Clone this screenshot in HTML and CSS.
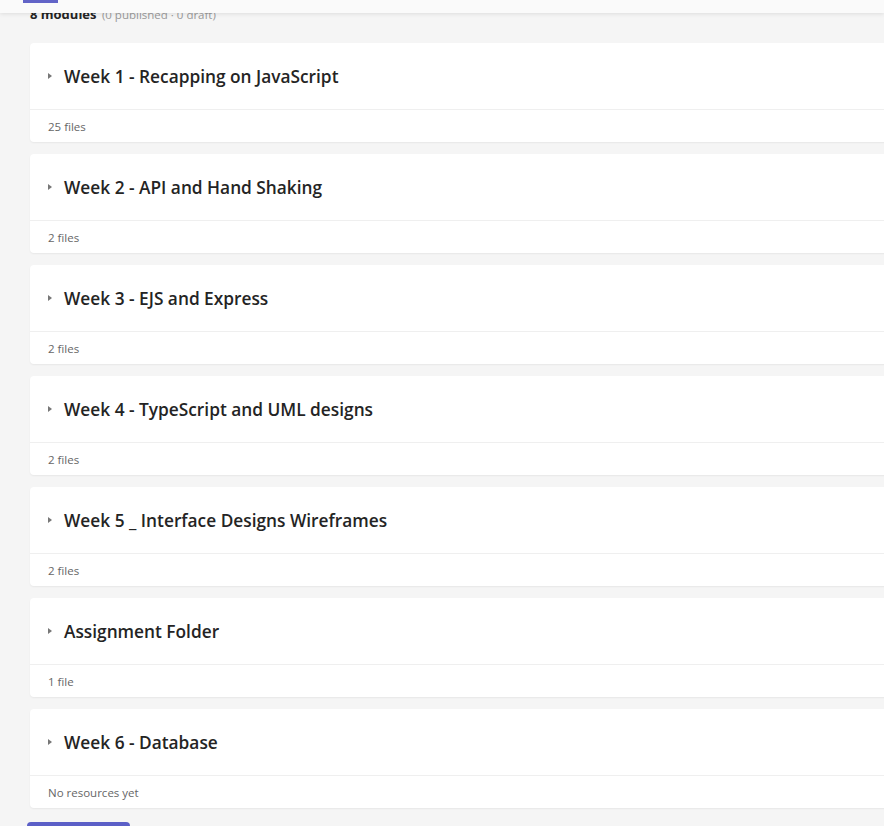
FILE: index.html
```html
<!DOCTYPE html>
<html>
<head>
<meta charset="utf-8">
<link rel="stylesheet" href="styles.css">
</head>
<body>
<header class="topbar"><span class="tab"></span></header>
<main class="page">
  <div class="summary"><b>8 modules</b> <span class="muted">(0 published · 0 draft)</span></div>
  <section class="module">
    <div class="module-head"><span class="caret"></span><h2>Week 1 - Recapping on JavaScript</h2></div>
    <div class="module-foot">25 files</div>
  </section>
  <section class="module">
    <div class="module-head"><span class="caret"></span><h2>Week 2 - API and Hand Shaking</h2></div>
    <div class="module-foot">2 files</div>
  </section>
  <section class="module">
    <div class="module-head"><span class="caret"></span><h2>Week 3 - EJS and Express</h2></div>
    <div class="module-foot">2 files</div>
  </section>
  <section class="module">
    <div class="module-head"><span class="caret"></span><h2>Week 4 - TypeScript and UML designs</h2></div>
    <div class="module-foot">2 files</div>
  </section>
  <section class="module">
    <div class="module-head"><span class="caret"></span><h2>Week 5 _ Interface Designs Wireframes</h2></div>
    <div class="module-foot">2 files</div>
  </section>
  <section class="module">
    <div class="module-head"><span class="caret"></span><h2>Assignment Folder</h2></div>
    <div class="module-foot">1 file</div>
  </section>
  <section class="module">
    <div class="module-head"><span class="caret"></span><h2>Week 6 - Database</h2></div>
    <div class="module-foot">No resources yet</div>
  </section>
  <div class="actions"><button class="add-btn" aria-label="Add module"></button></div>
</main>
</body>
</html>
```
FILE: styles.css
```css
html, body {
  margin: 0;
  padding: 0;
  background: #f5f5f5;
  overflow: hidden;
  font-family: "Open Sans", "Noto Sans", sans-serif;
  color: #242424;
}
.topbar {
  position: fixed;
  top: 0;
  left: 0;
  right: 0;
  height: 13px;
  background: #fafafa;
  box-shadow: 0 1px 4px rgba(0,0,0,0.10);
  z-index: 2;
}
.tab {
  position: absolute;
  left: 23px;
  top: 0;
  width: 35px;
  height: 3px;
  background: #6264c7;
}
.page {
  padding: 5px 0 0 30px;
}
.summary {
  font-size: 13px;
  line-height: 18px;
  height: 18px;
  margin-bottom: 20px;
}
.summary b { font-weight: 700; }
.muted { color: #999; font-size: 11.5px; margin-left: 2px; }
.module {
  width: 900px;
  background: #fff;
  border-radius: 4px;
  box-shadow: 0 1px 2px rgba(0,0,0,0.06);
  margin-bottom: 12px;
}
.module-head {
  height: 67px;
  display: flex;
  align-items: center;
  padding-left: 18px;
  border-bottom: 1px solid #efefef;
  box-sizing: border-box;
}
.caret {
  width: 0;
  height: 0;
  border-top: 3px solid transparent;
  border-bottom: 3px solid transparent;
  border-left: 4px solid #777;
  margin-right: 12px;
}
.module-head h2 {
  margin: 0;
  font-size: 17.3px;
  font-weight: 600;
  color: #242424;
}
.module-foot {
  height: 32px;
  display: flex;
  align-items: center;
  padding-left: 18px;
  font-size: 11.5px;
  color: #666;
}
.actions {
  padding-top: 2px;
}
.add-btn {
  width: 103px;
  height: 32px;
  margin-left: -3px;
  background: #5b5fc7;
  border: none;
  border-radius: 4px;
}
```
